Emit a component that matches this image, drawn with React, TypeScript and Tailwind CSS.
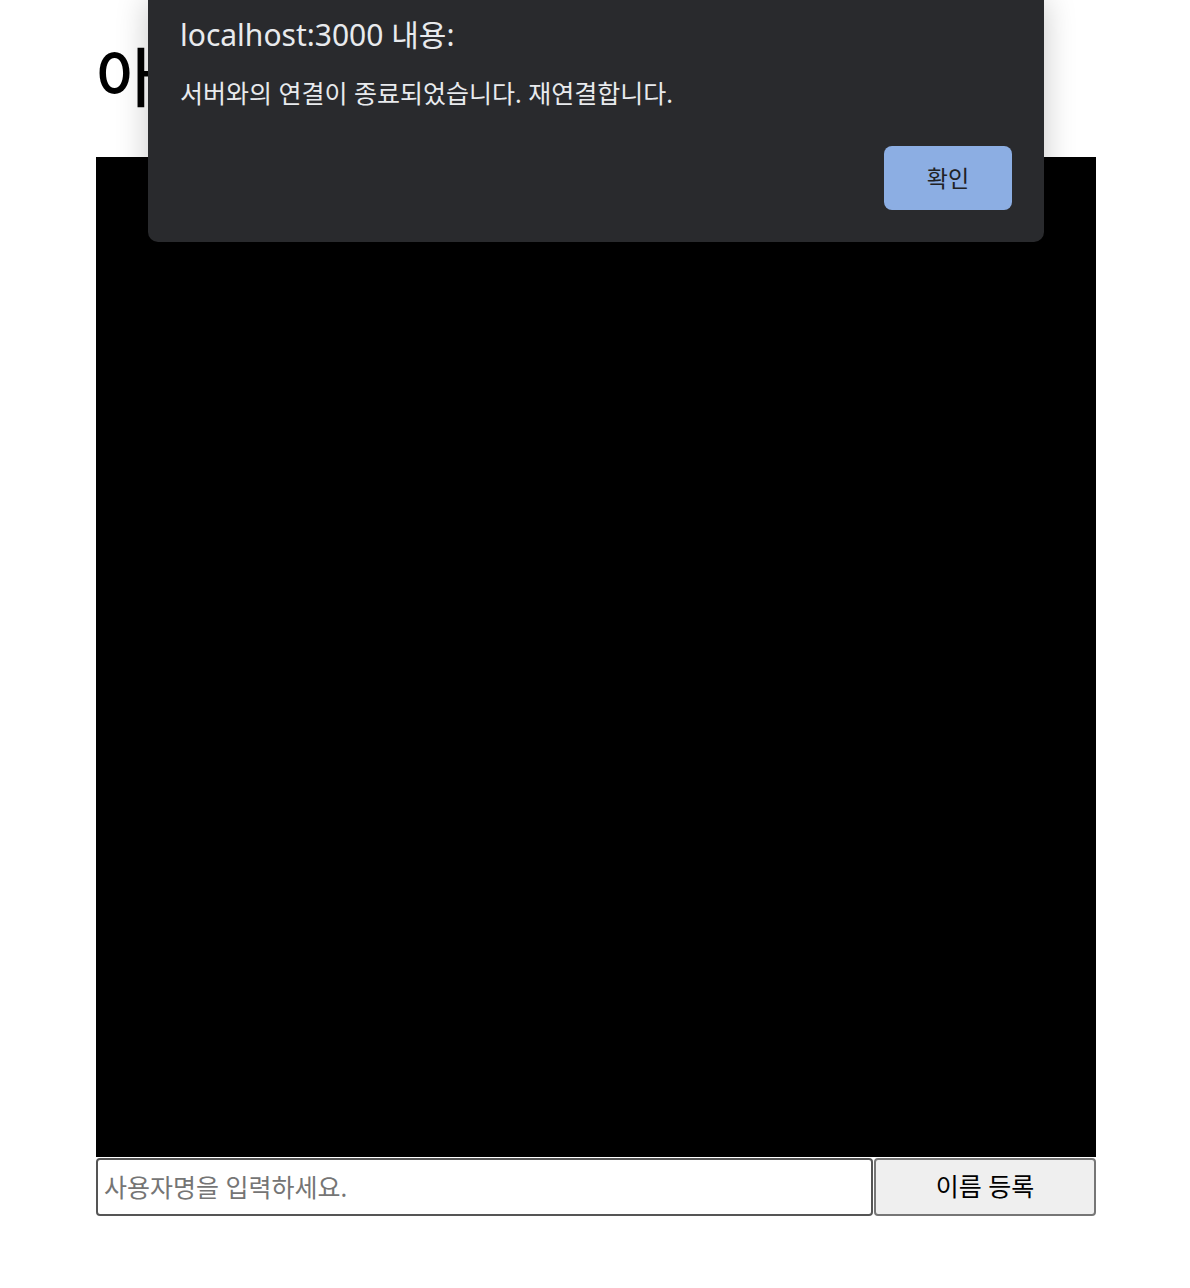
import { useState } from "react";

const FONT = "font-['Noto_Sans','Noto_Sans_CJK_KR',sans-serif]";

export default function App() {
  const [name, setName] = useState("");

  return (
    <div className={`relative min-h-[1288px] bg-white ${FONT}`}>
      <div className="px-[96px] pt-[32px]">
        <h1 className="text-[64px] leading-[90px] font-medium text-black mb-[35px]">아바타</h1>
        <div className="w-[1000px] h-[1000px] bg-black" />
        <div className="flex w-[1000px] mt-[1px]">
          <input
            value={name}
            onChange={(e) => setName(e.target.value)}
            placeholder="사용자명을 입력하세요."
            className="w-[777px] h-[58px] border-2 border-[#555] rounded-[4px] px-[6px] text-[25px] text-black placeholder:text-[#757575] outline-none"
          />
          <button className="ml-[1px] flex-1 h-[58px] bg-[#efefef] border-2 border-[#767676] rounded-[4px] text-[25px] text-black">
            이름 등록
          </button>
        </div>
      </div>

      {/* alert dialog */}
      <div className="absolute left-[148px] top-0 w-[896px] h-[242px] bg-[#292a2d] rounded-b-[10px] shadow-[0_0_32px_rgba(0,0,0,0.22)] px-[32px]">
        <p className="pt-[13px] text-[30px] leading-[44px] text-[#e8eaed]">localhost:3000 내용:</p>
        <p className="mt-[18px] text-[25px] leading-[36px] text-[#e8eaed]">
          서버와의 연결이 종료되었습니다. 재연결합니다.
        </p>
        <div className="flex justify-end mt-[35px]">
          <button className="w-[128px] h-[64px] rounded-[8px] bg-[#8caee3] text-[23px] text-[#202124]">
            확인
          </button>
        </div>
      </div>
    </div>
  );
}
